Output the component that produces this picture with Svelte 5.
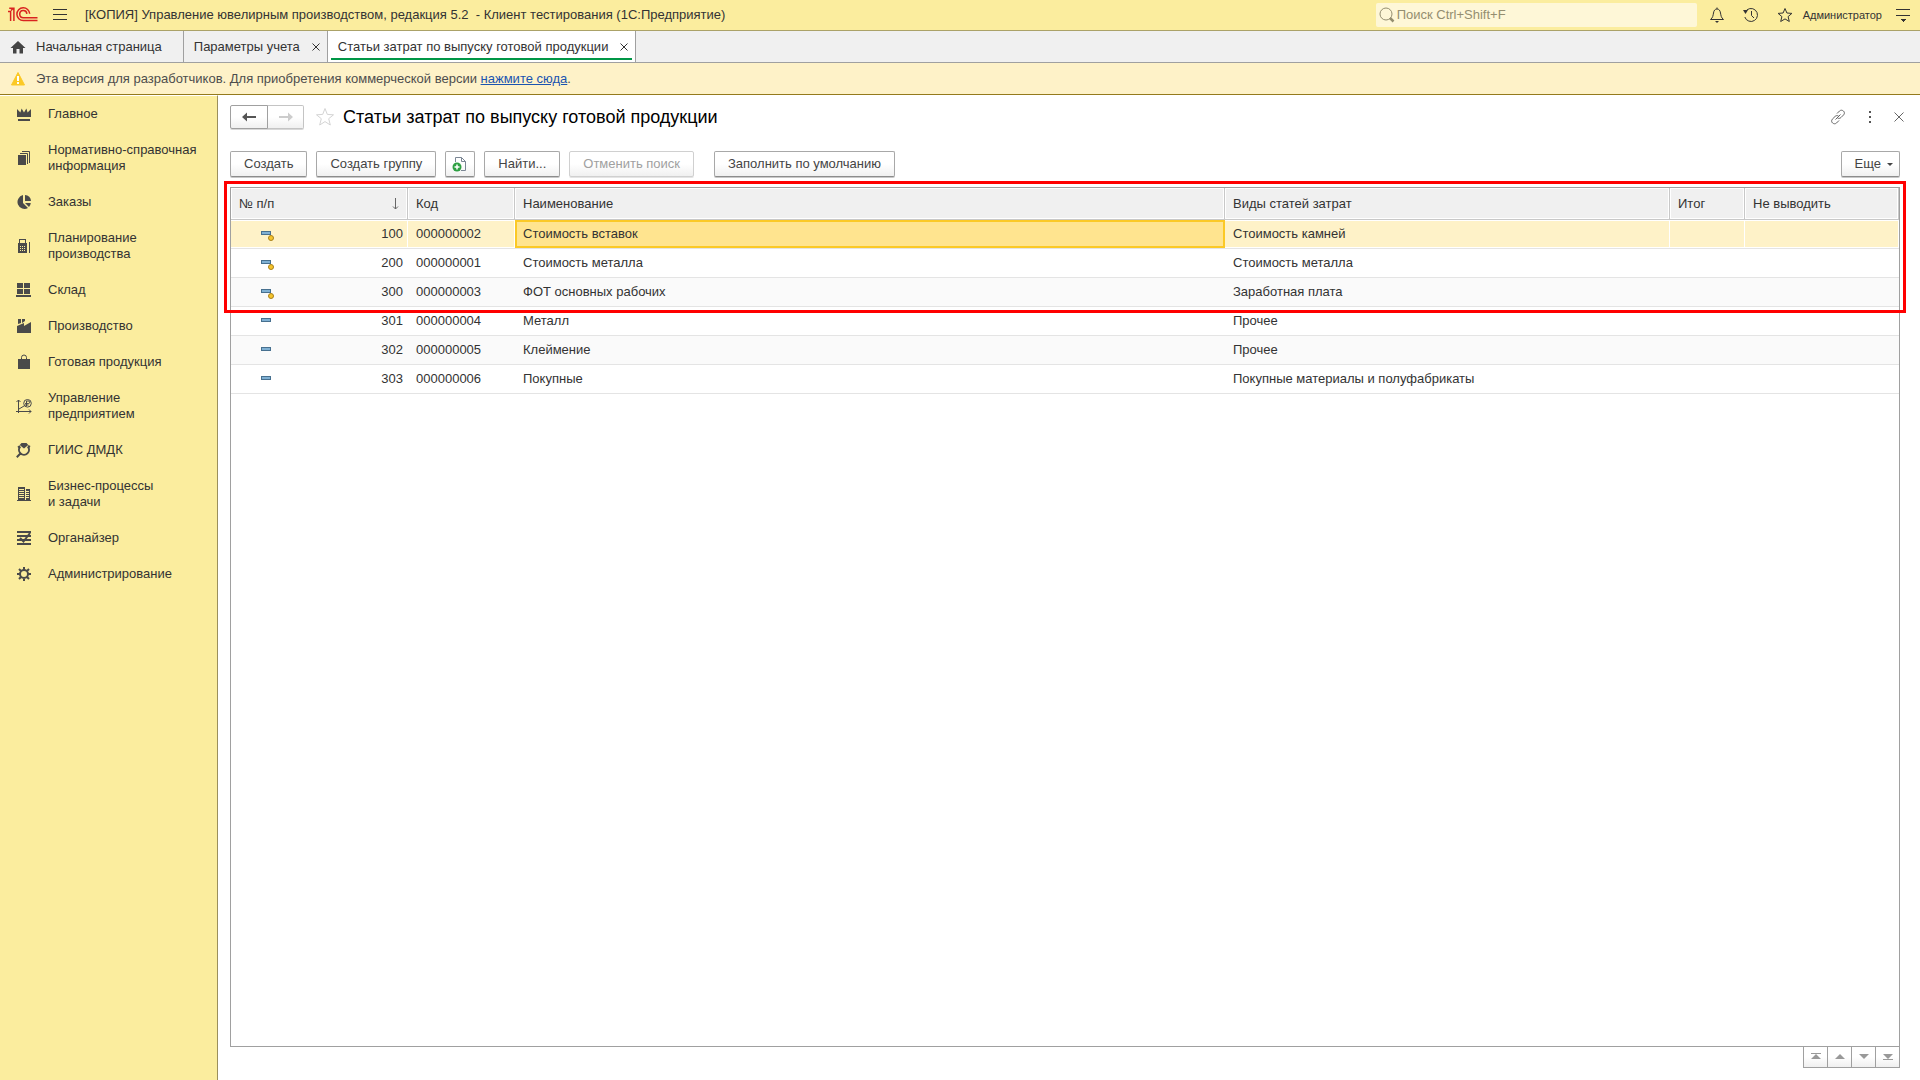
<script>
  let sections = [
    {
      title: 'Главное',
      fill: 'M1 3l3.4 3.6L5.6 2.5 8 6.4l2.4-3.9 1.2 4.1L15 3v8H1zM2 13h12v2H2z'
    },
    {
      title: 'Нормативно-справочная информация',
      fill: 'M2 5h8v10H2z',
      line: 'M4 3.5h7.5V14M6 1.5h7.5V13'
    },
    {
      title: 'Заказы',
      fill: 'M7 1.1V9l5 5A7 7 0 1 1 7 1.1zM9 1a6 6 0 0 1 6 6H9zM9 9h5.8a7 7 0 0 1-1.8 4z'
    },
    {
      title: 'Планирование производства',
      fill: 'M2 5h1V1h7v4h1v10H2zM4 2v3h5V2zM4 8v1h1V8zM6 8v1h1V8zM8 8v1h1V8zM4 10v1h1v-1zM6 10v1h1v-1zM8 10v1h1v-1zM4 12v1h1v-1zM6 12v1h1v-1zM8 12v1h1v-1zM13 4h1v11h-1z'
    },
    {
      title: 'Склад',
      fill: 'M1 1h6v5H1zM8 1h6v5H8zM1 7h6v5H1zM8 7h6v5H8zM0 13h15v2H0z'
    },
    {
      title: 'Производство',
      fill: 'M2 1h3v4l-3 1zM6 1h3v2L6 5zM1 8l7-3v3l7-4v11H1z'
    },
    {
      title: 'Готовая продукция',
      fill: 'M2 5h12v10H2z',
      line: 'M5.5 5V3.5a2.5 2.5 0 0 1 5 0V5'
    },
    {
      title: 'Управление предприятием',
      line: 'M2.5 15V2M.5 4l2-2 2 2M0 13.5h15M13 11.5l2 2-2 2M3 11l5-3M11.5 1.5a3.8 3.8 0 1 0 0 7.6 3.8 3.8 0 0 0 0-7.6M10.5 8V3h1.8a1.3 1.3 0 0 1 0 2.6H9M9 7h3.5'
    },
    {
      title: 'ГИИС ДМДК',
      fill: 'M5.5 1h5l1.8 2L8 6.5 3.7 3z',
      line: 'M4.2 4.5a5 5 0 1 0 7.6 0M4.4 11.5L.8 15.2M12 4l2 1M4 4L2 5.5',
      bold: true
    },
    {
      title: 'Бизнес-процессы и\u00a0задачи',
      fill: 'M2 1h7v13H2zM3 3v1h5V3zM3 5v1h5V5zM3 7v1h5V7zM3 9v1h5V9zM3 11v1h5v-1zM10 3h4v11h-4zM10 5v1h3V5zM10 7v1h3V7zM10 9v1h3V9zM10 11v1h3v-1zM1 14h14v1H1z'
    },
    {
      title: 'Органайзер',
      line: 'M1 2h14M1 6h14M1 10h14M1 14h14M14 3L7.5 11.5 4 8',
      bold: true
    },
    {
      title: 'Администрирование',
      line: 'M8 4a4 4 0 1 0 0 8 4 4 0 0 0 0-8M8 1v3M8 12v3M1 8h3M12 8h3M3 3l2.2 2.2M10.8 10.8L13 13M13 3l-2.2 2.2M5.2 10.8L3 13',
      bold: true
    }
  ];

  let rows = [
    { num: 100, code: '000000002', name: 'Стоимость вставок', kind: 'Стоимость камней', predefined: true },
    { num: 200, code: '000000001', name: 'Стоимость металла', kind: 'Стоимость металла', predefined: true },
    { num: 300, code: '000000003', name: 'ФОТ основных рабочих', kind: 'Заработная плата', predefined: true },
    { num: 301, code: '000000004', name: 'Металл', kind: 'Прочее' },
    { num: 302, code: '000000005', name: 'Клеймение', kind: 'Прочее' },
    { num: 303, code: '000000006', name: 'Покупные', kind: 'Покупные материалы и полуфабрикаты' }
  ];

  let scrollButtons = [
    { label: 'В начало', d: 'M3 4h10v1H3zM8 5l5 5H3z' },
    { label: 'Вверх', d: 'M8 5l5 5H3z' },
    { label: 'Вниз', d: 'M3 5h10l-5 5z' },
    { label: 'В конец', d: 'M3 5h10l-5 5zM3 10h10v1H3z' }
  ];

  let selected = $state(0);
</script>

<div class="app">
  <header class="topbar">
    <svg class="logo" width="30" height="16" viewBox="0 0 30 16" aria-label="1С">
      <path d="M0 4.5h2.6V14M1.2 1.2h4.7V14M3 3.5L5.5 1M21.7 6.8a6.4 6.4 0 1 0-6.4 6.8H29.5M18.9 6.8a3.6 3.6 0 1 0-3.6 4H29.5" />
    </svg>
    <button class="plain" aria-label="Меню">
      <svg width="14" height="12" viewBox="0 0 14 12" class="ink crisp"><path d="M0 .5h14M0 5.5h14M0 10.5h14" /></svg>
    </button>
    <span class="app-title">[КОПИЯ] Управление ювелирным производством, редакция 5.2 &nbsp;- Клиент тестирования (1С:Предприятие)</span>
    <label class="search">
      <svg width="16" height="16" viewBox="0 0 16 16"><circle cx="7" cy="7" r="6" /><path d="M11 11l3.5 3.5" stroke-width="2.5" /></svg>
      <input type="text" placeholder="Поиск Ctrl+Shift+F" aria-label="Поиск" />
    </label>
    <div class="tools">
      <button class="plain" aria-label="Уведомления">
        <svg width="16" height="16" viewBox="0 0 16 16" class="ink"><path d="M1.5 12.5c2.5-2 2.5-4 3-6.5.4-2.5 1.5-4 3.5-4s3.1 1.5 3.5 4c.5 2.5.5 4.5 3 6.5zM8 .5V2" /><path d="M6 14h4l-2 2z" fill="#333" stroke="none" /></svg>
      </button>
      <button class="plain" aria-label="История">
        <svg width="16" height="16" viewBox="0 0 16 16" class="ink"><path d="M2.2 5a6.5 6.5 0 1 1-.4 5M8.5 4v4.5l2.5 2.5" /><path d="M0 3h5L2.5 7z" fill="#333" stroke="none" /></svg>
      </button>
      <button class="plain" aria-label="Избранное">
        <svg width="16" height="16" viewBox="0 0 16 16" class="ink"><path d="M8 1.5l1.9 4.5 5 .4-3.8 3.2 1.2 4.9L8 11.9l-4.3 2.6 1.2-4.9L1.1 6.4l5-.4z" /></svg>
      </button>
      <a class="user" href="#user">Администратор</a>
      <button class="plain" aria-label="Настройка">
        <svg width="14" height="14" viewBox="0 0 14 14" class="ink crisp"><path d="M0 1.5h14M0 7.5h14" /><path d="M4 11h6l-3 3z" fill="#333" stroke="none" /></svg>
      </button>
    </div>
  </header>

  <div class="tabs">
    <div class="tab home">
      <svg width="16" height="14" viewBox="0 0 16 14"><path d="M8 1l7.5 7H13v5.5H9.5V9h-3v4.5H3V8H.5z" fill="#444" /></svg>
      <span>Начальная страница</span>
    </div>
    <div class="tab">
      <span>Параметры учета</span>
      <button class="plain" aria-label="Закрыть">
        <svg width="8" height="8" viewBox="0 0 8 8" class="ink"><path d="M.5.5l7 7M7.5.5l-7 7" /></svg>
      </button>
    </div>
    <div class="tab active">
      <span>Статьи затрат по выпуску готовой продукции</span>
      <button class="plain" aria-label="Закрыть">
        <svg width="8" height="8" viewBox="0 0 8 8" class="ink"><path d="M.5.5l7 7M7.5.5l-7 7" /></svg>
      </button>
    </div>
  </div>

  <div class="notice">
    <svg width="16" height="16" viewBox="0 0 16 16"><path d="M8 1.5L14.5 14h-13z" fill="#fbc926" stroke="#fbc926" stroke-linejoin="round" /><path d="M7 5h2v5H7zM7 11h2v2H7z" fill="#fff" /></svg>
    <span>Эта версия для разработчиков. Для приобретения коммерческой версии <a href="#buy">нажмите сюда</a>.</span>
  </div>

  <div class="body">
    <nav>
      {#each sections as section}
        <a href="#section">
          <svg width="16" height="16" viewBox="0 0 16 16">
            {#if section.fill}<path d={section.fill} fill="#4a4a4a" fill-rule="evenodd" />{/if}
            {#if section.line}<path d={section.line} fill="none" stroke="#4a4a4a" stroke-width={section.bold ? 2 : 1} />{/if}
          </svg>
          <span>{section.title}</span>
        </a>
      {/each}
    </nav>

    <main>
      <div class="heading">
        <div class="history">
          <button aria-label="Назад">
            <svg width="14" height="12" viewBox="0 0 14 12"><path d="M0 6l5-4.500V5h9v2H5v3.500z" fill="#555" /></svg>
          </button>
          <button aria-label="Вперед" disabled>
            <svg width="14" height="12" viewBox="0 0 14 12"><path d="M14 6L9 1.500V5H0v2h9v3.500z" fill="#ccc" /></svg>
          </button>
        </div>
        <button class="plain" aria-label="В избранное">
          <svg width="20" height="20" viewBox="0 0 20 20"><path d="M10 1.5l2.3 5.9 6.2.4-4.800 3.900 1.600 6.300L10 14.600 4.700 18l1.600-6.300L1.500 7.800l6.200-.4z" fill="none" stroke="#d4d4d4" /></svg>
        </button>
        <h1>Статьи затрат по выпуску готовой продукции</h1>
        <div class="window-tools">
          <button class="plain" aria-label="Ссылка">
            <svg width="16" height="16" viewBox="0 0 16 16" class="gray"><path d="M7 4.500l2.500-2.500c2.500-2.300 6.500 1 4.200 3.800L11 8.500c-1 1-2.500 1.200-3.500.5M9 11.500L6.500 14c-2.500 2.300-6.500-1-4.200-3.800L5 7.500c1-1 2.500-1.200 3.500-.5M5.500 10.500l5-5" /></svg>
          </button>
          <button class="plain" aria-label="Еще действия">
            <svg width="4" height="12" viewBox="0 0 4 12"><path d="M1 0h2v2H1zM1 5h2v2H1zM1 10h2v2H1z" fill="#555" /></svg>
          </button>
          <button class="plain" aria-label="Закрыть">
            <svg width="10" height="10" viewBox="0 0 10 10" class="gray"><path d="M.5.5l9 9M9.5.5l-9 9" /></svg>
          </button>
        </div>
      </div>

      <div class="toolbar">
        <button class="btn">Создать</button>
        <button class="btn">Создать группу</button>
        <button class="btn icon" aria-label="Создать копированием">
          <svg width="16" height="16" viewBox="0 0 16 16"><path d="M3.5 6V1.5h6l4 4v9H9M9.5 1.5v4h4" fill="none" stroke="#7b8694" /><circle cx="5" cy="11" r="4.5" fill="#2ea043" /><path d="M5 8.5v5M2.5 11h5" stroke="#fff" stroke-width="1.5" /></svg>
        </button>
        <button class="btn">Найти...</button>
        <button class="btn" disabled>Отменить поиск</button>
        <button class="btn fill">Заполнить по умолчанию</button>
        <button class="btn more">Еще <svg width="6" height="3" viewBox="0 0 6 3"><path d="M0 0h6L3 3z" fill="#444" /></svg></button>
      </div>

      <div class="list">
        <table>
          <colgroup>
            <col class="c-num" />
            <col class="c-code" />
            <col />
            <col class="c-kind" />
            <col class="c-total" />
            <col class="c-hide" />
          </colgroup>
          <thead>
            <tr>
              <th>
                <div class="sorted">
                  <span>№ п/п</span>
                  <svg width="7" height="12" viewBox="0 0 7 12" class="gray"><path d="M3.5 0v11M1 8.5l2.5 2.5L6 8.5" /></svg>
                </div>
              </th>
              <th>Код</th>
              <th>Наименование</th>
              <th>Виды статей затрат</th>
              <th>Итог</th>
              <th>Не выводить</th>
            </tr>
          </thead>
          <tbody>
            {#each rows as row, i}
              <tr class:selected={selected === i} onclick={() => (selected = i)}>
                <td>
                  <div class="num">
                    <svg width="14" height="14" viewBox="0 0 14 14">
                      <rect x=".5" y="4.5" width="9" height="3" fill="#7fb0d3" stroke="#47708f" />
                      {#if row.predefined}<circle cx="10" cy="11" r="2.5" fill="#f5c52c" stroke="#a9801a" />{/if}
                    </svg>
                    <span>{row.num}</span>
                  </div>
                </td>
                <td>{row.code}</td>
                <td class="name">{row.name}</td>
                <td>{row.kind}</td>
                <td></td>
                <td></td>
              </tr>
            {/each}
          </tbody>
        </table>
        <div class="frame"></div>
      </div>

      <div class="scroll">
        {#each scrollButtons as button}
          <button aria-label={button.label}>
            <svg width="16" height="16" viewBox="0 0 16 16"><path d={button.d} fill="#999" /></svg>
          </button>
        {/each}
      </div>
    </main>
  </div>
</div>

<style>
  :global(body) {
    margin: 0;
    background: #fff;
  }

  .app {
    display: flex;
    flex-direction: column;
    min-height: 100vh;
    font: 13px/16px "Liberation Sans", Arial, sans-serif;
    color: #333;
  }

  .app :global(*) {
    box-sizing: border-box;
  }

  svg {
    display: block;
    flex: none;
  }

  button,
  input {
    font: inherit;
    color: inherit;
  }

  .plain {
    display: flex;
    padding: 0;
    border: 0;
    background: none;
  }

  .ink {
    fill: none;
    stroke: #333;
  }

  .gray {
    fill: none;
    stroke: #666;
  }

  .crisp {
    shape-rendering: crispEdges;
  }

  /* top bar */
  .topbar {
    display: flex;
    align-items: center;
    height: 31px;
    padding: 0 10px 0 8px;
    background: #fbed9e;
    border-bottom: 1px solid #aba268;
  }

  .logo {
    margin-right: 15px;
    fill: none;
    stroke: #d9231f;
    stroke-width: 1.5;
  }

  .app-title {
    margin-left: 18px;
    white-space: nowrap;
  }

  .search {
    display: flex;
    align-items: center;
    width: 321px;
    height: 24px;
    margin-left: auto;
    padding-left: 3px;
    background: #fef7d7;
    border-radius: 2px;
  }

  .search svg {
    fill: none;
    stroke: #948e70;
  }

  .search input {
    flex: 1;
    min-width: 0;
    padding: 0 0 0 2px;
    border: 0;
    outline: 0;
    background: none;
  }

  .search input::placeholder {
    color: #948e70;
    opacity: 1;
  }

  .tools {
    display: flex;
    align-items: center;
    gap: 18px;
    margin-left: 12px;
  }

  .user {
    margin: 0 -4px 0 -8px;
    font-size: 11px;
    color: #333;
    text-decoration: none;
  }

  /* open windows */
  .tabs {
    display: flex;
    height: 32px;
    background: #f0f0f0;
    border-bottom: 1px solid #a0a0a0;
  }

  .tab {
    display: flex;
    align-items: center;
    gap: 12px;
    padding: 0 7px 0 10px;
    border-right: 1px solid #a0a0a0;
    white-space: nowrap;
  }

  .tab.home {
    gap: 10px;
    padding-right: 21px;
  }

  .tab.active {
    position: relative;
    background: #fff;
  }

  .tab.active::after {
    content: '';
    position: absolute;
    left: 3px;
    right: 3px;
    bottom: 2px;
    height: 2px;
    background: #009646;
  }

  .notice {
    display: flex;
    align-items: center;
    gap: 10px;
    height: 32px;
    padding-left: 10px;
    background: #fef2c8;
    border-bottom: 1px solid #947a1c;
    color: #4d4d4d;
  }

  .notice a {
    color: #1a54b0;
  }

  .body {
    display: flex;
    flex: 1;
  }

  /* sections */
  nav {
    flex: none;
    width: 218px;
    background: #fbed9e;
    border-top: 1px solid #fff;
    border-right: 1px solid #9b8f5c;
  }

  nav a {
    display: flex;
    align-items: center;
    gap: 16px;
    padding: 10px 16px;
    color: #333;
    text-decoration: none;
  }

  nav span {
    max-width: 154px;
  }

  /* list form */
  main {
    display: flex;
    flex: 1;
    flex-direction: column;
    min-width: 0;
    padding: 10px 20px 12px 12px;
  }

  .heading {
    display: flex;
    align-items: center;
    height: 24px;
    margin-bottom: 22px;
  }

  .history {
    display: flex;
    margin-right: 11px;
  }

  .history button {
    display: flex;
    align-items: center;
    justify-content: center;
    width: 38px;
    height: 24px;
    padding: 0;
    border: 1px solid #a0a0a0;
    border-radius: 2px 0 0 2px;
    background: linear-gradient(#fff 50%, #f0f0f0);
    box-shadow: 0 1px #d8d8d8;
  }

  .history button + button {
    width: 37px;
    margin-left: -1px;
    border-color: #c4c4c4;
    border-left-color: #a0a0a0;
    border-radius: 0 2px 2px 0;
  }

  h1 {
    margin: 0 0 0 8px;
    font-size: 18px;
    font-weight: normal;
    line-height: 22px;
    color: #000;
    white-space: nowrap;
  }

  .window-tools {
    display: flex;
    align-items: center;
    gap: 22px;
    margin-left: auto;
    margin-right: -4px;
  }

  .toolbar {
    display: flex;
    gap: 9px;
    margin-bottom: 10px;
  }

  .btn {
    display: flex;
    align-items: center;
    height: 26px;
    padding: 0 13px;
    border: 1px solid #a8a8a8;
    border-bottom-color: #8c8c8c;
    border-radius: 2px;
    background: linear-gradient(#fff 50%, #f0f0f0);
    box-shadow: 0 1px #c8c8c8;
    color: #444;
    white-space: nowrap;
  }

  .btn:disabled {
    border-color: #d0d0d0;
    box-shadow: 0 1px #e4e4e4;
    color: #a0a0a0;
  }

  .btn.icon {
    padding: 0 6px;
  }

  .btn.fill {
    margin-left: 11px;
  }

  .btn.more {
    gap: 6px;
    margin-left: auto;
    padding-right: 6px;
  }

  .list {
    position: relative;
    flex: 1;
    border: 1px solid #a0a0a0;
  }

  table {
    width: 100%;
    table-layout: fixed;
    border-collapse: separate;
    border-spacing: 0;
  }

  .c-num {
    width: 177px;
  }

  .c-code {
    width: 107px;
  }

  .c-kind {
    width: 445px;
  }

  .c-total {
    width: 75px;
  }

  .c-hide {
    width: 154px;
  }

  th,
  td {
    padding: 0 8px;
    text-align: left;
    white-space: nowrap;
  }

  th {
    height: 32px;
    border-right: 1px solid #c8c8c8;
    border-bottom: 1px solid #c8c8c8;
    background: #f0f0f0;
    box-shadow: inset 0 0 0 1px #fff;
    font-weight: normal;
  }

  td {
    height: 29px;
    border-bottom: 1px solid #e4e4e4;
  }

  tbody tr:nth-child(odd) td {
    background: #fafafa;
  }

  tbody tr:nth-child(even) td {
    background: #fff;
  }

  tbody tr.selected td {
    background: #fef2c8;
    box-shadow: inset -1px -1px #fff, inset 0 1px #fff;
  }

  tbody tr.selected td.name {
    background: #ffe48f;
    box-shadow: inset 0 0 0 2px #fbc926;
  }

  .sorted,
  .num {
    display: flex;
    align-items: center;
    justify-content: space-between;
  }

  .num {
    padding-left: 22px;
    margin-right: -3px;
  }

  /* marks the predefined items */
  .frame {
    position: absolute;
    top: -7px;
    left: -7px;
    right: -7px;
    height: 132px;
    border: 3px solid #f00;
    pointer-events: none;
  }

  .scroll {
    display: flex;
    justify-content: flex-end;
    margin-top: -1px;
  }

  .scroll button {
    display: flex;
    align-items: center;
    justify-content: center;
    width: 25px;
    height: 22px;
    margin-left: -1px;
    padding: 0;
    border: 1px solid #a0a0a0;
    background: linear-gradient(#fff 50%, #f0f0f0);
  }
</style>
